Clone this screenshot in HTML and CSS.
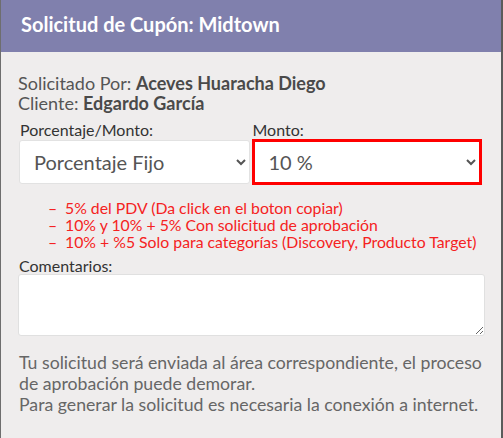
FILE: index.html
```html
<!DOCTYPE html>
<html lang="es">
<head>
  <meta charset="UTF-8">
  <meta name="viewport" content="width=device-width, initial-scale=1.0">
  <title>Solicitud de Cupón</title>
  <link rel="stylesheet" href="styles.css">
</head>
<body>
  <div class="modal">
    <header class="modal-header">
      <h1>Solicitud de Cupón: Midtown</h1>
    </header>

    <div class="modal-body">
      <p class="info">
        Solicitado Por: <b>Aceves Huaracha Diego</b><br>
        Cliente: <b>Edgardo García</b>
      </p>

      <div class="row">
        <div class="field">
          <label for="tipo">Porcentaje/Monto:</label>
          <select id="tipo">
            <option>Porcentaje Fijo</option>
            <option>Monto Fijo</option>
          </select>
        </div>
        <div class="field">
          <label for="monto">Monto:</label>
          <select id="monto" class="invalid">
            <option>10 %</option>
            <option>5 %</option>
            <option>15 %</option>
          </select>
        </div>
      </div>

      <ul class="rules">
        <li>5% del PDV (Da click en el boton copiar)</li>
        <li>10% y 10% + 5% Con solicitud de aprobación</li>
        <li>10% + %5 Solo para categorías (Discovery, Producto Target)</li>
      </ul>

      <label for="comentarios">Comentarios:</label>
      <textarea id="comentarios"></textarea>

      <p class="note">
        Tu solicitud será enviada al área correspondiente, el proceso de aprobación puede demorar.<br>
        Para generar la solicitud es necesaria la conexión a internet.
      </p>
    </div>
  </div>
</body>
</html>
```

FILE: styles.css
```css
* {
  box-sizing: border-box;
}

body {
  margin: 0;
  background: #5b5b5b;
  font-family: Lato, 'Open Sans', sans-serif;
  min-height: 100vh;
}

.modal {
  width: 501px;
  min-height: 438px;
  background: #efeded;
  border-left: 1px solid #6e6e6e;
}

.modal-header {
  height: 52px;
  background: #8080ad;
  padding: 0 20px;
  display: flex;
  align-items: center;
}

.modal-header h1 {
  margin: 0 0 4px;
  font-size: 20px;
  font-weight: bold;
  color: #fff;
}

.modal-body {
  padding: 21px 16px 0 17px;
}

.info {
  margin: 0;
  font-size: 18px;
  line-height: 20px;
  color: #555;
}

.info b {
  color: #4a4a4a;
}

label {
  display: block;
  font-size: 16px;
  line-height: 16px;
  color: #333;
}

.row {
  display: flex;
  gap: 2px;
  margin-top: 9px;
  padding-left: 1px;
  padding-right: 3px;
}

.field {
  flex: 1;
}

.field label {
  padding-left: 1px;
}

select {
  width: 100%;
  height: 44px;
  margin-top: 2px;
  padding: 0 8px 0 10px;
  border: 1px solid #e2e2e2;
  border-radius: 3px;
  background: #fff;
  font-family: inherit;
  font-size: 20px;
  color: #555;
}

select.invalid {
  border: 3px solid #f00;
  border-radius: 0;
  margin-top: 1px;
  height: 46px;
  padding-left: 10px;
}

.rules {
  list-style: none;
  margin: 14px 0 0;
  padding-left: 30px;
  font-size: 15.8px;
  line-height: 17px;
  color: #f52222;
}

.rules li::before {
  content: "\2013";
  display: inline-block;
  width: 17px;
}

.modal-body > label {
  margin-top: 8px;
  padding-left: 1px;
}

textarea {
  display: block;
  width: 467px;
  height: 62px;
  margin-top: 0;
  border: 1px solid #e0e0e0;
  border-radius: 3px;
  background: #fff;
  font-family: inherit;
  resize: vertical;
}

.note {
  margin: 16px 0 0;
  padding-left: 1px;
  font-size: 17.7px;
  line-height: 21px;
  color: #666;
}
```
